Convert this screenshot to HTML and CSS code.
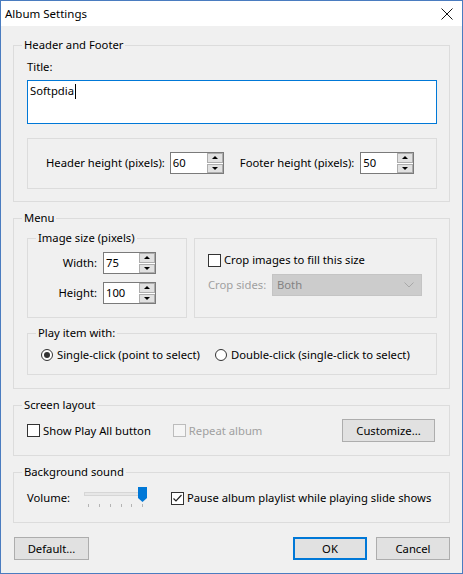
FILE: index.html
```html
<!DOCTYPE html>
<html>
<head>
<meta charset="utf-8">
<title>Album Settings</title>
<link rel="stylesheet" href="styles.css">
</head>
<body>
<div class="window">
  <div class="titlebar">
    <span class="title">Album Settings</span>
    <svg class="close" width="12" height="12" viewBox="0 0 12 12"><path d="M0.5 0.5 L11.5 11.5 M11.5 0.5 L0.5 11.5" stroke="#111" stroke-width="1" fill="none"/></svg>
  </div>
  <div class="content">
    <div class="group g-header">
      <div class="legend lg6">Header and Footer</div>
      <div class="label">Title:</div>
      <div class="textbox"><span>Softpdia</span><span class="caret"></span></div>
      <div class="subbox hf-row">
        <span>Header height (pixels):</span>
        <div class="spin spin-hf"><span class="val">60</span><div class="spin-btns"><span class="sb"><i class="up"></i></span><span class="sb"><i class="down"></i></span></div></div>
        <span class="lbl-footer">Footer height (pixels):</span>
        <div class="spin spin-hf"><span class="val">50</span><div class="spin-btns"><span class="sb"><i class="up"></i></span><span class="sb"><i class="down"></i></span></div></div>
      </div>
    </div>

    <div class="group g-menu">
      <div class="legend lg-menu">Menu</div>
      <div class="menu-top">
        <div class="group g-size">
          <div class="legend lg6">Image size (pixels)</div>
          <div class="size-grid">
            <span class="rlabel">Width:</span>
            <div class="spin"><span class="val">75</span><div class="spin-btns"><span class="sb"><i class="up"></i></span><span class="sb"><i class="down"></i></span></div></div>
            <span class="rlabel">Height:</span>
            <div class="spin"><span class="val">100</span><div class="spin-btns"><span class="sb"><i class="up"></i></span><span class="sb"><i class="down"></i></span></div></div>
          </div>
        </div>
        <div class="group g-crop">
          <div class="check-item"><span class="cbox"></span><span>Crop images to fill this size</span></div>
          <div class="crop-row">
            <span class="disabled">Crop sides:</span>
            <div class="combo"><span>Both</span><svg width="10" height="6" viewBox="0 0 10 6"><path d="M0.5 0.5 L5 5 L9.5 0.5" stroke="#a8a8a8" fill="none"/></svg></div>
          </div>
        </div>
      </div>
      <div class="group g-play">
        <div class="legend lg6">Play item with:</div>
        <div class="radio-row">
          <div class="radio-item"><span class="radio checked"></span><span>Single-click (point to select)</span></div>
          <div class="radio-item"><span class="radio"></span><span>Double-click (single-click to select)</span></div>
        </div>
      </div>
    </div>

    <div class="group g-screen">
      <div class="legend lg6">Screen layout</div>
      <div class="screen-row">
        <div class="check-item"><span class="cbox"></span><span>Show Play All button</span></div>
        <div class="check-item repeat"><span class="cbox cbox-disabled"></span><span class="disabled">Repeat album</span></div>
        <div class="btn btn-customize">Customize...</div>
      </div>
    </div>

    <div class="group g-sound">
      <div class="legend lg6">Background sound</div>
      <div class="sound-row">
        <span class="vol-label">Volume:</span>
        <svg class="slider" width="64" height="24" viewBox="0 0 64 24">
          <rect x="0.5" y="6.5" width="57" height="3" fill="#e7e7e7" stroke="#d6d6d6"/>
          <g stroke="#b4b4b4" stroke-width="1">
            <path d="M4.5 18 V21 M15.5 18 V21 M26.5 18 V21 M37.5 18 V21 M47.5 18 V21 M58.5 18 V21"/>
          </g>
          <path d="M54 1 H63 V12 L58.5 16 L54 12 Z" fill="#0078d7"/>
        </svg>
        <div class="check-item"><span class="cbox checked"><svg width="11" height="11" viewBox="0 0 11 11"><path d="M1.5 5.5 L4 8 L9.5 2" stroke="#222" stroke-width="1.2" fill="none"/></svg></span><span>Pause album playlist while playing slide shows</span></div>
      </div>
    </div>

    <div class="button-row">
      <div class="btn btn-default">Default...</div>
      <div class="btn btn-ok">OK</div>
      <div class="btn btn-cancel">Cancel</div>
    </div>
  </div>
</div>
</body>
</html>
```

FILE: styles.css
```css
* { box-sizing: border-box; }
html, body { margin: 0; padding: 0; }
body {
  font-family: "Noto Sans", "Open Sans", sans-serif;
  font-size: 11.25px;
  line-height: 16px;
  color: #000;
  background: #f0f0f0;
}
.window {
  width: 463px;
  height: 574px;
  border: 1px solid #4a7cc0;
  background: #f0f0f0;
  display: flex;
  flex-direction: column;
}
.titlebar {
  flex: none;
  height: 25px;
  background: #fff;
  display: flex;
  align-items: center;
  justify-content: space-between;
  padding: 0 9px 0 4px;
}
.title { font-size: 11.5px; }
.close { display: block; margin-top: 1px; }
.content { padding: 19px 12px 0 12px; }

.group {
  border: 1px solid #dcdcdc;
  display: flex;
  flex-direction: column;
  min-width: 0;
}
.legend {
  align-self: flex-start;
  height: 16px;
  line-height: 16px;
  margin: -9px 0 0 -5px;
  padding: 0 2px;
  background: #f0f0f0;
  white-space: nowrap;
}
.lg6 { margin-bottom: 6px; }
.lg-menu { margin-bottom: 12px; }

.g-header { padding: 0 12px 12px 13px; }
.label { height: 16px; }
.textbox {
  margin-top: 5px;
  height: 44px;
  background: #fff;
  border: 1px solid #0078d7;
  padding: 2px 2px;
  display: flex;
  align-items: flex-start;
}
.caret {
  display: inline-block;
  width: 1px;
  height: 15px;
  background: #000;
  margin-top: 1px;
  margin-left: 1px;
}
.subbox { margin-top: 14px; border: 1px solid #dcdcdc; }
.hf-row {
  display: flex;
  align-items: center;
  padding: 13px 0 14px 18px;
}
.hf-row .spin { margin-left: 5px; }
.lbl-footer { margin-left: 16px; }
.hf-row .lbl-footer + .spin { margin-left: 6px; }

.spin {
  width: 53px;
  height: 22px;
  background: #fff;
  border: 1px solid #7a7a7a;
  display: flex;
  justify-content: space-between;
  flex: none;
}
.spin-hf { width: 54px; }
.spin .val { padding-left: 2px; line-height: 19px; }
.spin-btns {
  width: 16px;
  display: flex;
  flex-direction: column;
  gap: 1px;
}
.sb {
  flex: 1;
  background: #e1e1e1;
  border: 1px solid #adadad;
  display: flex;
  align-items: center;
  justify-content: center;
}
.sb i { display: block; width: 0; height: 0; border-left: 3px solid transparent; border-right: 3px solid transparent; }
.sb i.up { border-bottom: 3px solid #000; }
.sb i.down { border-top: 3px solid #000; }

.g-menu { margin-top: 16px; padding: 0 12px 13px 13px; }
.menu-top {
  display: grid;
  grid-template-columns: 160px 243px;
  column-gap: 7px;
}
.g-size { padding: 0 0 13px 13px; }
.size-grid {
  display: grid;
  grid-template-columns: 56px 52px;
  column-gap: 6px;
  row-gap: 8px;
  align-items: center;
}
.rlabel { text-align: right; }
.g-crop { padding: 13px 14px 0 13px; }
.check-item { display: flex; align-items: center; height: 16px; white-space: nowrap; }
.cbox {
  width: 13px;
  height: 13px;
  border: 1px solid #333;
  background: #fff;
  margin-right: 3px;
  flex: none;
  display: flex;
  align-items: center;
  justify-content: center;
}
.cbox-disabled { border-color: #bcbcbc; background: #f5f5f5; }
.disabled { color: #a0a0a0; }
.crop-row {
  margin-top: 6px;
  display: flex;
  align-items: center;
  justify-content: space-between;
}
.combo {
  width: 150px;
  height: 22px;
  background: #cccccc;
  border: 1px solid #c4c4c4;
  color: #838383;
  display: flex;
  align-items: center;
  justify-content: space-between;
  padding: 0 7px 0 4px;
}

.g-play { margin-top: 15px; padding: 0 12px 11px 13px; }
.radio-row { display: flex; align-items: center; height: 16px; white-space: nowrap; }
.radio-item { display: flex; align-items: center; }
.radio-item + .radio-item { margin-left: 15px; }
.radio {
  width: 12px;
  height: 12px;
  border: 1px solid #333;
  border-radius: 50%;
  background: #fff;
  margin-right: 4px;
  display: flex;
  align-items: center;
  justify-content: center;
  flex: none;
}
.radio.checked::after {
  content: "";
  width: 6px;
  height: 6px;
  border-radius: 50%;
  background: #333;
}

.g-screen { margin-top: 16px; padding: 0 14px 13px 13px; }
.screen-row { display: flex; align-items: center; height: 23px; }
.repeat { margin-left: 22px; }
.btn {
  height: 23px;
  background: #e1e1e1;
  border: 1px solid #adadad;
  display: flex;
  align-items: center;
  justify-content: center;
}
.btn-customize { width: 93px; margin-left: auto; }

.g-sound { margin-top: 16px; padding: 0 12px 12px 13px; }
.sound-row { display: flex; align-items: center; height: 24px; }
.vol-label { width: 57px; flex: none; }
.slider { display: block; flex: none; margin-right: 23px; }

.button-row { margin-top: 14px; display: flex; }
.btn-default { width: 75px; margin-left: 1px; }
.btn-ok { width: 74px; margin-left: auto; border: 2px solid #0078d7; }
.btn-cancel { width: 74px; margin-left: 9px; }
```
